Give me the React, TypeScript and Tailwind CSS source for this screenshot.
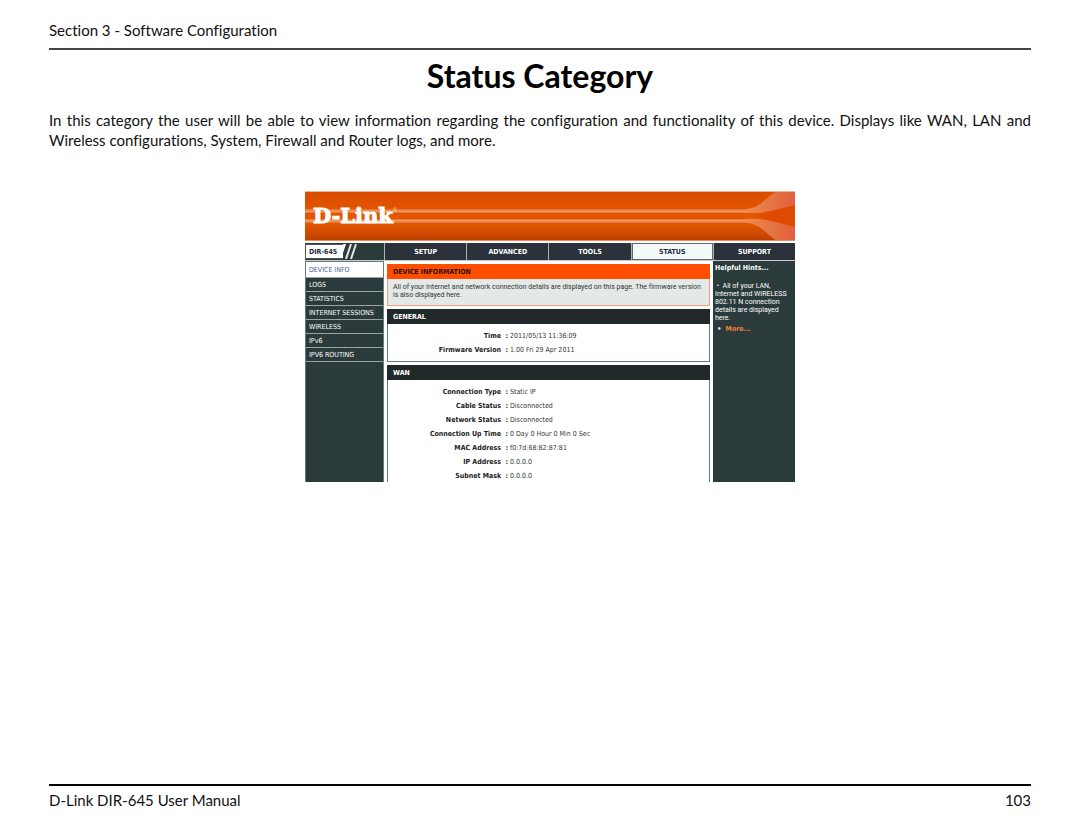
import React from 'react';

interface InfoRow {
  label: string;
  value: string;
}

const NAV_ITEMS = ['SETUP', 'ADVANCED', 'TOOLS', 'STATUS', 'SUPPORT'];

const SIDE_ITEMS = [
  'DEVICE INFO',
  'LOGS',
  'STATISTICS',
  'INTERNET SESSIONS',
  'WIRELESS',
  'IPv6',
  'IPV6 ROUTING',
];

const GENERAL: InfoRow[] = [
  { label: 'Time', value: '2011/05/13 11:36:09' },
  { label: 'Firmware Version', value: '1.00 Fri 29 Apr 2011' },
];

const WAN: InfoRow[] = [
  { label: 'Connection Type', value: 'Static IP' },
  { label: 'Cable Status', value: 'Disconnected' },
  { label: 'Network Status', value: 'Disconnected' },
  { label: 'Connection Up Time', value: '0 Day 0 Hour 0 Min 0 Sec' },
  { label: 'MAC Address', value: 'f0:7d:68:82:87:81' },
  { label: 'IP Address', value: '0.0.0.0' },
  { label: 'Subnet Mask', value: '0.0.0.0' },
];

const Banner: React.FC = () => (
  <div className="relative flex h-[50px] items-center overflow-hidden px-2">
    <svg className="absolute inset-0 h-full w-full" viewBox="0 0 490 50" preserveAspectRatio="none" aria-hidden="true">
      <defs>
        <linearGradient id="bg" x1="0" y1="0" x2="0" y2="1">
          <stop offset="0" stopColor="#d84a00" />
          <stop offset="0.35" stopColor="#e35400" />
          <stop offset="0.62" stopColor="#e45800" />
          <stop offset="0.85" stopColor="#cf4900" />
          <stop offset="1" stopColor="#b93e00" />
        </linearGradient>
        <linearGradient id="swoosh" x1="0" y1="0" x2="1" y2="0">
          <stop offset="0" stopColor="#eb8a4c" />
          <stop offset="1" stopColor="#e0603c" />
        </linearGradient>
      </defs>
      <rect width="490" height="50" fill="url(#bg)" />
      <path d="M452 24.500 C466 19 478 17 490 14 V36 C478 34 466 31 452 25.500 Z" fill="#de4a00" />
      <rect y="18" width="446" height="4" fill="#e87a38" />
      <rect y="19.500" width="446" height="1.500" fill="#ee9a65" />
      <rect y="28" width="446" height="4" fill="#e87a38" />
      <rect y="29" width="446" height="1.500" fill="#ee9a65" />
      <path d="M442 18 C456 17 462 4 473 0 H490 V14 C474 17 462 23 442 22 Z" fill="url(#swoosh)" />
      <path d="M442 28 C462 27 474 32 490 36 V50 H472 C462 44 456 33 442 32 Z" fill="url(#swoosh)" />
      <rect width="490" height="1" fill="#f0b59a" />
      <rect y="49" width="490" height="1" fill="#e58a62" />
    </svg>
    <div className="relative flex items-start text-white">
      <span className="font-['DejaVu_Serif'] text-[21px] leading-6 font-bold [-webkit-text-stroke:1px_white]">D-Link</span>
      <span className="font-['Liberation_Sans'] text-[5px] leading-3 text-orange-200">®</span>
    </div>
  </div>
);

const TopNav: React.FC = () => (
  <nav className="flex h-[17px] gap-px bg-[#a9b5b5]">
    <div className="flex w-[79px] items-center bg-[#2b3a3a]">
      <div className="flex h-[15px] w-[38px] items-center border border-r-0 border-[#555] bg-white pl-[3px] font-bold text-[#222c3a]">
        DIR-645
      </div>
      <svg className="h-[15px] w-4" viewBox="0 0 16 15" aria-hidden="true">
        <path d="M0 0 H3 L0 9 Z" fill="#fff" />
        <path d="M8 0 L3 15 M13 0 L8 15" stroke="#dfe5e5" strokeWidth="2" />
      </svg>
    </div>
    {NAV_ITEMS.map((item) => (
      <a
        key={item}
        href="#"
        className={`flex flex-1 items-center justify-center border font-bold ${
          item === 'STATUS' ? 'border-[#62686c] bg-[#f3f8f8] text-[#222c3a]' : 'border-[#2b323a] bg-[#2b323a] text-white'
        }`}
      >
        {item}
      </a>
    ))}
  </nav>
);

const SideNav: React.FC = () => (
  <ul className="w-[79px] border-x border-t border-[#5f7f7c] bg-[#2b3a3a]">
    {SIDE_ITEMS.map((item, i) => (
      <li key={item} className="border-b border-[#9aa5a3]">
        <a
          href="#"
          className={`flex items-center pl-[3px] whitespace-nowrap ${
            i === 0 ? 'h-[15px] bg-white text-[#4a5a96]' : 'h-[13px] text-white'
          }`}
        >
          {item}
        </a>
      </li>
    ))}
  </ul>
);

const InfoTable: React.FC<{ rows: InfoRow[] }> = ({ rows }) => (
  <table className="w-full">
    <tbody>
      {rows.map((row) => (
        <tr key={row.label} className="h-[14px]">
          <th className="w-[120px] text-right font-bold whitespace-nowrap text-[#222]">{row.label} &nbsp;:</th>
          <td className="pl-[2px] text-left text-[#333]">{row.value}</td>
        </tr>
      ))}
    </tbody>
  </table>
);

const Panel: React.FC<{ title: string; children: React.ReactNode }> = ({ title, children }) => (
  <section className="border border-[#5f7f7c] bg-white">
    <h3 className="-m-px flex h-[15px] items-center bg-[#20282a] pl-[6px] font-bold text-white">{title}</h3>
    {children}
  </section>
);

const RouterPage: React.FC = () => (
  <div className="w-full max-w-[490px] font-['DejaVu_Sans_Condensed','DejaVu_Sans',sans-serif] text-[7px] leading-[8px]">
    <Banner />
    <div className="h-[2px] bg-white" />
    <TopNav />
    <div className="h-px bg-[#c9c9cb]" />
    <div className="flex h-[221px] overflow-hidden">
      <SideNav />
      <main className="flex flex-1 flex-col gap-[3px] bg-white px-[3px] pt-[3px]">
        <section className="border border-[#f59a7a] bg-[#e3e9e7]">
          <h2 className="-m-px flex h-[15px] items-center bg-[#ff4e00] pl-[6px] font-bold text-[#2a1206]">
            DEVICE INFORMATION
          </h2>
          <p className="px-[5px] pt-[5px] pb-[6px] font-['Roboto',sans-serif] text-[#333]">
            All of your Internet and network connection details are displayed on this page. The firmware version is also
            displayed here.
          </p>
        </section>
        <Panel title="GENERAL">
          <div className="pt-[6px] pb-1">
            <InfoTable rows={GENERAL} />
          </div>
        </Panel>
        <Panel title="WAN">
          <div className="pt-[6px] pb-2">
            <InfoTable rows={WAN} />
          </div>
        </Panel>
      </main>
      <aside className="w-[82px] bg-[#2b3a3a] pt-[3px] pr-2 pl-[2px] text-white">
        <h3 className="font-bold">Helpful Hints...</h3>
        <p className="pt-[10px] font-['Roboto',sans-serif]">
          &nbsp;• &nbsp;All of your LAN, Internet and WIRELESS 802.11 N connection details are displayed here.
        </p>
        <p className="pt-[3px] font-bold">
          &nbsp;• &nbsp;
          <a href="#" className="text-[#f0803c]">
            More...
          </a>
        </p>
      </aside>
    </div>
  </div>
);

const App: React.FC = () => {
  return (
    <div className="flex min-h-screen flex-col bg-white px-[49px] font-['Lato',sans-serif] text-[15px] leading-5 text-[#111] [font-variant-ligatures:none]">
      <header className="border-b-2 border-[#444] pt-5 pb-2">Section 3 - Software Configuration</header>

      <div className="flex-1">
        <h1 className="pt-1 text-center text-[32px] leading-[44px] font-bold text-black">Status Category</h1>
        <p className="pt-3 text-justify">
          In this category the user will be able to view information regarding the configuration and functionality of this
          device. Displays like WAN, LAN and Wireless configurations, System, Firewall and Router logs, and more.
        </p>
        <div className="flex justify-center pt-[41px] pl-5">
          <RouterPage />
        </div>
      </div>

      <footer className="flex justify-between border-t-2 border-black pt-1 pb-6">
        <span>D-Link DIR-645 User Manual</span>
        <span>103</span>
      </footer>
    </div>
  );
};

export default App;
